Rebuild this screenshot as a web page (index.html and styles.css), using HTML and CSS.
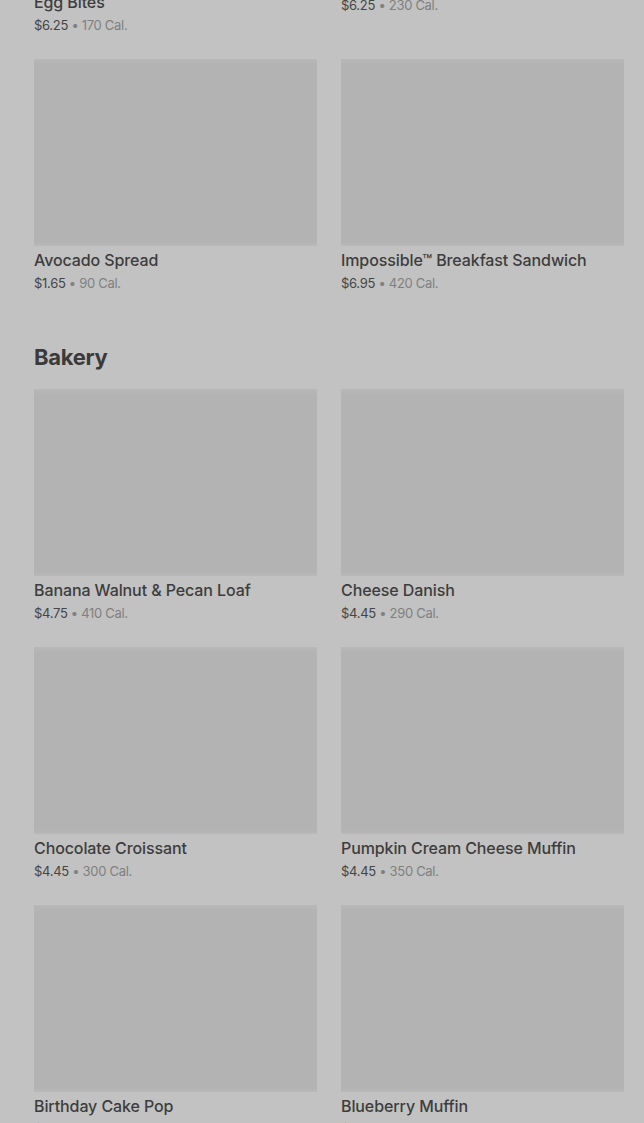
FILE: index.html
```html
<!DOCTYPE html>
<html lang="en">
<head>
    <meta charset="UTF-8">
    <meta name="viewport" content="width=device-width, initial-scale=1.0">
    <link rel="stylesheet" href="styles.css">
    <title>Menu</title>
</head>
<body>
    <div class="menu">
        <section class="category first">
            <div class="grid">
                <div class="product">
                    <div class="thumb"></div>
                    <h3 class="name">Egg White &amp; Roasted Red Pepper Egg&nbsp;Bites</h3>
                    <p class="meta"><span class="price">$6.25</span> • 170 Cal.</p>
                </div>
                <div class="product">
                    <div class="thumb"></div>
                    <h3 class="name">Kale &amp; Mushroom Egg Bites</h3>
                    <p class="meta"><span class="price">$6.25</span> • 230 Cal.</p>
                </div>
                <div class="product">
                    <div class="thumb"></div>
                    <h3 class="name">Avocado Spread</h3>
                    <p class="meta"><span class="price">$1.65</span> • 90 Cal.</p>
                </div>
                <div class="product">
                    <div class="thumb"></div>
                    <h3 class="name">Impossible™ Breakfast Sandwich</h3>
                    <p class="meta"><span class="price">$6.95</span> • 420 Cal.</p>
                </div>
            </div>
        </section>

        <section class="category">
            <h2 class="title">Bakery</h2>
            <div class="grid">
                <div class="product">
                    <div class="thumb"></div>
                    <h3 class="name">Banana Walnut &amp; Pecan Loaf</h3>
                    <p class="meta"><span class="price">$4.75</span> • 410 Cal.</p>
                </div>
                <div class="product">
                    <div class="thumb"></div>
                    <h3 class="name">Cheese Danish</h3>
                    <p class="meta"><span class="price">$4.45</span> • 290 Cal.</p>
                </div>
                <div class="product">
                    <div class="thumb"></div>
                    <h3 class="name">Chocolate Croissant</h3>
                    <p class="meta"><span class="price">$4.45</span> • 300 Cal.</p>
                </div>
                <div class="product">
                    <div class="thumb"></div>
                    <h3 class="name">Pumpkin Cream Cheese Muffin</h3>
                    <p class="meta"><span class="price">$4.45</span> • 350 Cal.</p>
                </div>
                <div class="product">
                    <div class="thumb"></div>
                    <h3 class="name">Birthday Cake Pop</h3>
                    <p class="meta"><span class="price">$2.95</span> • 160 Cal.</p>
                </div>
                <div class="product">
                    <div class="thumb"></div>
                    <h3 class="name">Blueberry Muffin</h3>
                    <p class="meta"><span class="price">$3.45</span> • 360 Cal.</p>
                </div>
            </div>
        </section>
    </div>
</body>
</html>
```

FILE: styles.css
```css
*{
    box-sizing: border-box;
}
body{
    margin: 0;
    padding: 0;
    background-color: #c2c2c2;
    font-family: Inter, "Liberation Sans", sans-serif;
    color: #3b3b3b;
    overflow: hidden;
}

.menu{
    padding: 0 20px 0 34px;
}
/* page is scrolled down a bit */
.first{
    margin-top: -219px;
}
.category{
    margin-bottom: 51px;
}
.title{
    margin: 0 0 18px 0;
    font-size: 22px;
    line-height: 28px;
    font-weight: 700;
    letter-spacing: -0.3px;
    color: #3a3a3a;
}

.grid{
    display: grid;
    grid-template-columns: 1fr 1fr;
    column-gap: 24px;
    row-gap: 25px;
}
.thumb{
    height: 187px;
    background: linear-gradient(180deg, #b8b8b8 0, #b3b3b3 6px, #b3b3b3 183px, #b9b9b9 187px);
}
.name{
    margin: 4px 0 0 0;
    font-size: 16px;
    line-height: 20px;
    font-weight: 500;
    letter-spacing: -0.1px;
    color: #3d3d3d;
}
.meta{
    margin: 4px 0 0 0;
    font-size: 13px;
    line-height: 18px;
    letter-spacing: -0.3px;
    color: #808080;
}
.price{
    color: #454545;
}
```
